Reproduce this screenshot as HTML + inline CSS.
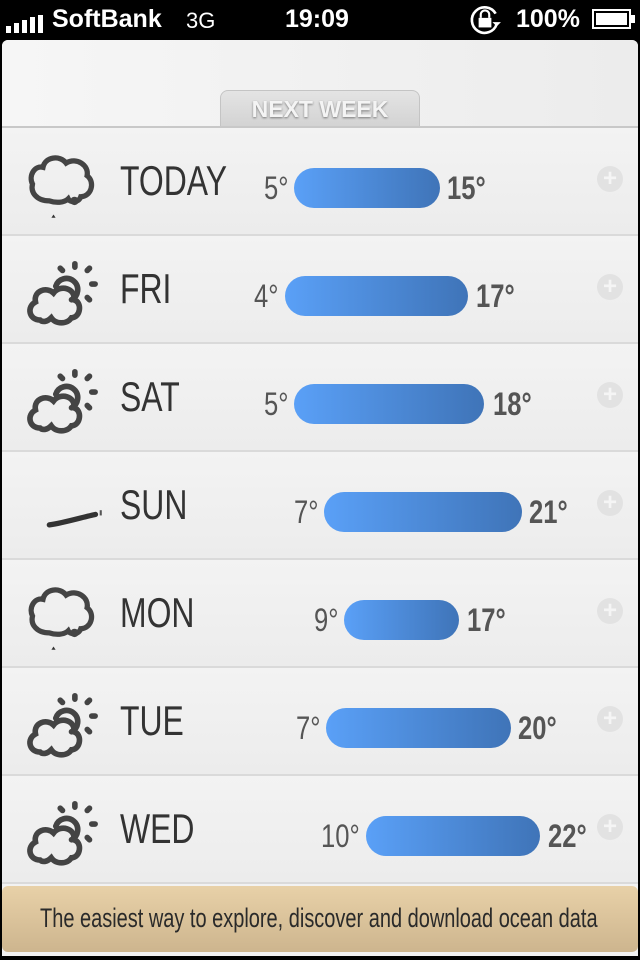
<!DOCTYPE html>
<html><head><meta charset="utf-8"><style>
*{margin:0;padding:0;box-sizing:border-box}
html,body{width:640px;height:960px;overflow:hidden}
body{background:#000;position:relative;font-family:"Liberation Sans",sans-serif}
.sb{position:absolute;top:0;left:0;width:640px;height:40px;color:#fff;font-size:24px}
.sb span{position:absolute;top:6px;white-space:nowrap}
.main{position:absolute;top:40px;left:2px;width:636px;height:916px;background:#f2f2f2;border-radius:6px 6px 0 0;overflow:hidden}
.hdr{position:absolute;top:0;left:0;width:636px;height:88px;background:linear-gradient(90deg,#f6f6f6,#ececec)}
.tab{position:absolute;left:218px;top:50px;width:200px;height:38px;border-radius:8px 8px 0 0;background:linear-gradient(#e4e4e4,#d2d2d2);border:1px solid #c4c4c4;border-bottom:none;text-align:center;font-weight:bold;font-size:23px;color:#f4f4f4;line-height:36px;text-shadow:0 1px 2px rgba(0,0,0,.45)}
.line{position:absolute;top:86px;left:0;width:636px;height:4px;background:#c8c8c8}
.row{position:absolute;left:0;width:636px;height:108px;background:linear-gradient(#f3f3f3,#ececec);border-bottom:2px solid #dadada}
.day{position:absolute;left:118px;font-size:42px;color:#333;transform:scaleX(.76);transform-origin:0 0;top:29px;white-space:nowrap}
.lo,.hi{position:absolute;font-size:32px;color:#555;transform:scaleX(.8);transform-origin:0 0;top:42px;white-space:nowrap}
.hi{font-weight:bold}
.bar{position:absolute;height:40px;top:40px;border-radius:20px;background:linear-gradient(90deg,#5aa0f7,#3f74b8)}
.plus{position:absolute;left:595px;top:38px;width:26px;height:26px;border-radius:50%;background:#e2e2e2;color:#f5f5f5;font-size:24px;font-weight:bold;text-align:center;line-height:26px}
.ic{position:absolute;left:20px;top:12px}
.ban{position:absolute;left:2px;top:886px;width:636px;height:66px;border-radius:6px;background:linear-gradient(#e8d1a8,#cdb58e);line-height:64px;font-size:27px;color:#2a2a2a;overflow:hidden}
.ban span{position:absolute;left:38px;white-space:nowrap;transform:scaleX(.74);transform-origin:0 0}
</style></head><body>
<div class="sb">
<span style="left:6px;top:12px"><svg width="40" height="18"><rect x="0" y="11" width="5" height="7" fill="#fff"/><rect x="8" y="8" width="5" height="10" fill="#fff"/><rect x="16" y="5" width="5" height="13" fill="#fff"/><rect x="24" y="2" width="5" height="16" fill="#fff"/><rect x="32" y="0" width="5" height="18" fill="#fff"/></svg></span>
<span style="left:52px;font-weight:bold;font-size:25px;top:5px">SoftBank</span><span style="left:186px;font-size:22px;top:8px">3G</span>
<span style="left:285px;font-weight:bold;font-size:25px;top:5px">19:09</span>
<span style="left:468px;top:3px"><svg width="34" height="34" viewBox="0 0 32 32"><path d="M26 10A12 12 0 1 0 27 20" fill="none" stroke="#fff" stroke-width="2.5"/><path d="M23 18l4 4 4-4z" fill="#fff"/><rect x="10" y="14" width="12" height="9" fill="#fff"/><path d="M12 14v-3a4 4 0 0 1 8 0v3" fill="none" stroke="#fff" stroke-width="2"/></svg></span>
<span style="left:516px;font-weight:bold;font-size:25px;top:5px">100%</span>
<span style="left:592px;top:9px"><svg width="44" height="22"><rect x="1" y="1" width="37" height="18" fill="none" stroke="#fff" stroke-width="2"/><rect x="4" y="4" width="31" height="12" fill="#fff"/><rect x="39" y="6" width="4" height="8" fill="#fff"/></svg></span>
</div>
<div class="main">
<div class="hdr"></div>
<div class="tab">NEXT WEEK</div>
<div class="line"></div>

<div class="row" style="top:88px">
<svg class="ic" width="84" height="84" viewBox="0 0 80 80"><path d="M26 58C14 58 8 50 10 42 6 34 12 24 20 26 22 16 36 14 42 22 52 16 64 24 62 34 70 40 66 54 56 54 54 60 46 60 44 56 40 60 32 60 26 58Z" fill="none" stroke="#444" stroke-width="5"/><circle cx="50" cy="58" r="4" fill="#444"/><path d="M28 74l2-3 2 3z" fill="#333"/></svg>
<div class="day">TODAY</div><div class="lo" style="left:262px">5°</div><div class="bar" style="left:292px;width:146px"></div><div class="hi" style="left:445px">15°</div><div class="plus">+</div></div>

<div class="row" style="top:196px">
<svg class="ic" width="90" height="90" viewBox="0 0 80 80"><g stroke="#444" stroke-width="5" fill="none" stroke-linecap="round"><path d="M44 46a10 10 0 1 0-14-12"/><path d="M47 14v3M58 20l2-2M62 32h3M58 44l2 2M36 20l-2-2"/><path d="M16 64C6 64 4 52 12 48 10 38 22 34 28 40 34 32 48 36 46 46 54 48 52 62 44 62 40 68 30 68 26 62 22 66 18 66 16 64Z"/></g></svg>
<div class="day">FRI</div><div class="lo" style="left:252px">4°</div><div class="bar" style="left:283px;width:183px"></div><div class="hi" style="left:474px">17°</div><div class="plus">+</div></div>

<div class="row" style="top:304px">
<svg class="ic" width="90" height="90" viewBox="0 0 80 80"><g stroke="#444" stroke-width="5" fill="none" stroke-linecap="round"><path d="M44 46a10 10 0 1 0-14-12"/><path d="M47 14v3M58 20l2-2M62 32h3M58 44l2 2M36 20l-2-2"/><path d="M16 64C6 64 4 52 12 48 10 38 22 34 28 40 34 32 48 36 46 46 54 48 52 62 44 62 40 68 30 68 26 62 22 66 18 66 16 64Z"/></g></svg>
<div class="day">SAT</div><div class="lo" style="left:262px">5°</div><div class="bar" style="left:292px;width:190px"></div><div class="hi" style="left:491px">18°</div><div class="plus">+</div></div>

<div class="row" style="top:412px">
<svg class="ic" width="84" height="84" viewBox="0 0 80 80"><path d="M26 58C40 56 60 50 70 48" stroke="#333" stroke-width="5" fill="none" stroke-linecap="round"/><path d="M75 44v5" stroke="#555" stroke-width="2"/></svg>
<div class="day">SUN</div><div class="lo" style="left:292px">7°</div><div class="bar" style="left:322px;width:198px"></div><div class="hi" style="left:527px">21°</div><div class="plus">+</div></div>

<div class="row" style="top:520px">
<svg class="ic" width="84" height="84" viewBox="0 0 80 80"><path d="M26 58C14 58 8 50 10 42 6 34 12 24 20 26 22 16 36 14 42 22 52 16 64 24 62 34 70 40 66 54 56 54 54 60 46 60 44 56 40 60 32 60 26 58Z" fill="none" stroke="#444" stroke-width="5"/><circle cx="50" cy="58" r="4" fill="#444"/><path d="M28 74l2-3 2 3z" fill="#333"/></svg>
<div class="day">MON</div><div class="lo" style="left:312px">9°</div><div class="bar" style="left:342px;width:115px"></div><div class="hi" style="left:465px">17°</div><div class="plus">+</div></div>

<div class="row" style="top:628px">
<svg class="ic" width="90" height="90" viewBox="0 0 80 80"><g stroke="#444" stroke-width="5" fill="none" stroke-linecap="round"><path d="M44 46a10 10 0 1 0-14-12"/><path d="M47 14v3M58 20l2-2M62 32h3M58 44l2 2M36 20l-2-2"/><path d="M16 64C6 64 4 52 12 48 10 38 22 34 28 40 34 32 48 36 46 46 54 48 52 62 44 62 40 68 30 68 26 62 22 66 18 66 16 64Z"/></g></svg>
<div class="day">TUE</div><div class="lo" style="left:294px">7°</div><div class="bar" style="left:324px;width:185px"></div><div class="hi" style="left:516px">20°</div><div class="plus">+</div></div>

<div class="row" style="top:736px">
<svg class="ic" width="90" height="90" viewBox="0 0 80 80"><g stroke="#444" stroke-width="5" fill="none" stroke-linecap="round"><path d="M44 46a10 10 0 1 0-14-12"/><path d="M47 14v3M58 20l2-2M62 32h3M58 44l2 2M36 20l-2-2"/><path d="M16 64C6 64 4 52 12 48 10 38 22 34 28 40 34 32 48 36 46 46 54 48 52 62 44 62 40 68 30 68 26 62 22 66 18 66 16 64Z"/></g></svg>
<div class="day">WED</div><div class="lo" style="left:319px">10°</div><div class="bar" style="left:364px;width:174px"></div><div class="hi" style="left:546px">22°</div><div class="plus">+</div></div>
</div>
<div class="ban"><span>The easiest way to explore, discover and download ocean data</span></div>
</body></html>
